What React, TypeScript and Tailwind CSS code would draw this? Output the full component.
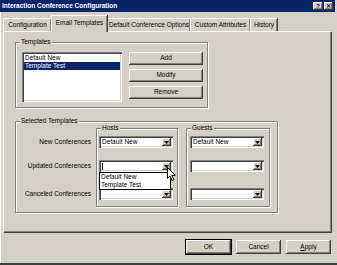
import React from "react";

const font = "font-['Liberation_Sans',Arial,sans-serif]";
const raised =
  "bg-[#d4d0c8] shadow-[inset_-1px_-1px_#404040,inset_1px_1px_#ffffff,inset_-2px_-2px_#808080]";
const sunken =
  "bg-white shadow-[inset_1px_1px_#808080,inset_2px_2px_#404040,inset_-1px_-1px_#ffffff,inset_-2px_-2px_#d4d0c8]";
const etched = "border border-[#808080] shadow-[1px_1px_0_#ffffff,inset_1px_1px_0_#ffffff]";

const Arrow = () => (
  <svg width="5" height="3" viewBox="0 0 5 3">
    <path d="M0 0h5L2.5 3z" fill="#000" />
  </svg>
);

const Combo = ({ value, caret }: { value?: string; caret?: boolean }) => (
  <div className={`flex h-[12px] w-[74px] items-center p-[2px] ${sunken}`}>
    <div className="flex flex-1 items-center pl-[1px] leading-none text-black">
      {caret && <span className="h-[7px] w-px bg-black" />}
      {value}
    </div>
    <div className={`flex h-[8px] w-[9px] items-center justify-center ${raised}`}>
      <Arrow />
    </div>
  </div>
);

const Button = ({
  label,
  def,
  wide,
}: {
  label: React.ReactNode;
  def?: boolean;
  wide?: boolean;
}) => (
  <button
    className={`flex items-center justify-center leading-none text-black ${raised} ${
      wide ? "h-[14px] w-[45px]" : "h-[13px] w-[74px]"
    } ${def ? "outline outline-1 outline-black" : ""}`}
  >
    {label}
  </button>
);

const Group = ({
  title,
  className,
  children,
}: {
  title: string;
  className: string;
  children: React.ReactNode;
}) => (
  <div className={`relative ${etched} ${className}`}>
    <span className="absolute left-[4px] top-[-5px] bg-[#d4d0c8] px-[1px] leading-[8px]">{title}</span>
    {children}
  </div>
);

const tabs = [
  { label: "Configuration", w: "w-[48px]" },
  { label: "Email Templates", w: "w-[56px]", active: true },
  { label: "Default Conference Options", w: "w-[83px]" },
  { label: "Custom Attributes", w: "w-[60px]" },
  { label: "History", w: "w-[27px]" },
];

export default function App() {
  return (
    <div
      className={`${font} flex h-[265px] w-[337px] flex-col overflow-hidden bg-[#d4d0c8] text-[6.5px] text-black border-b-2 border-b-[#404040] shadow-[inset_1px_0_#ffffff]`}
    >
      {/* title bar */}
      <div className="flex h-[12px] w-[335px] shrink-0 items-center bg-[#0a246a] pl-[2px] pr-[2px]">
        <span className="flex-1 text-[6.5px] font-bold leading-none text-white">
          Interaction Conference Configuration
        </span>
        <div className="flex gap-[1px]">
          <div className={`flex h-[8px] w-[10px] items-center justify-center text-[6px] font-bold leading-none ${raised}`}>
            ?
          </div>
          <div className={`flex h-[8px] w-[9px] items-center justify-center text-[6px] font-bold leading-none ${raised}`}>
            ✕
          </div>
        </div>
      </div>

      {/* tabs */}
      <div className="flex h-[19px] shrink-0 items-end pl-[3px]">
        {tabs.map((t) =>
          t.active ? (
            <div
              key={t.label}
              className={`relative z-10 -mb-px flex h-[17px] ${t.w} items-center justify-center border-l border-t border-white bg-[#d4d0c8] pb-[2px] leading-none shadow-[inset_-1px_0_#808080,1px_0_#404040]`}
            >
              {t.label}
            </div>
          ) : (
            <div
              key={t.label}
              className={`flex h-[13px] ${t.w} items-center justify-center border-l border-t border-white leading-none shadow-[inset_-1px_0_#808080,1px_0_#404040]`}
            >
              {t.label}
            </div>
          )
        )}
      </div>

      {/* tab panel */}
      <div className="ml-[3px] h-[201px] w-[328px] shrink-0 border-l border-t border-white pl-[11px] shadow-[inset_-1px_-1px_#808080,1px_1px_#404040]">
        <Group title="Templates" className="mt-[10px] h-[66px] w-[193px]">
          <div className="flex pl-[6px] pt-[9px]">
            <div className={`h-[50px] w-[100px] p-[2px] ${sunken}`}>
              <div className="flex h-[8px] items-center pl-[1px] leading-none">Default New</div>
              <div className="flex h-[8px] items-center bg-[#0a246a] pl-[1px] leading-none text-white">
                Template Test
              </div>
            </div>
            <div className="ml-[7px] flex flex-col gap-[4px]">
              <Button label="Add" />
              <Button label="Modify" />
              <Button label="Remove" />
            </div>
          </div>
        </Group>

        <Group title="Selected Templates" className="mt-[13px] h-[92px] w-[263px]">
          <div className="flex pt-[6px]">
            <div className="flex w-[75px] flex-col items-end pt-[8px] leading-none">
              <div className="flex h-[12px] items-center">New Conferences</div>
              <div className="mt-[12px] flex h-[12px] items-center">Updated Conferences</div>
              <div className="mt-[16px] flex h-[12px] items-center">Canceled Conferences</div>
            </div>

            <Group title="Hosts" className="ml-[5px] h-[79px] w-[82px]">
              <div className="flex flex-col pl-[2px] pt-[7px]">
                <Combo value="Default New" />
                <div className="relative mt-[12px]">
                  <Combo caret />
                  <div className="absolute left-0 top-[12px] z-20 h-[18px] w-[72px] border border-black bg-white pl-[1px] leading-none">
                    <div className="flex h-[8px] items-center">Default New</div>
                    <div className="flex h-[8px] items-center">Template Test</div>
                  </div>
                  <svg
                    className="absolute left-[68px] top-[7px] z-30"
                    width="9"
                    height="14"
                    viewBox="0 0 9 14"
                  >
                    <path
                      d="M0.5 0.5V11.5L3 9L5 13.5L6.8 12.7L4.8 8.3H8.3Z"
                      fill="#fff"
                      stroke="#000"
                      strokeWidth="1"
                      strokeLinejoin="round"
                    />
                  </svg>
                </div>
                <div className="mt-[16px]">
                  <Combo />
                </div>
              </div>
            </Group>

            <Group title="Guests" className="ml-[8px] h-[79px] w-[84px]">
              <div className="flex flex-col pl-[3px] pt-[7px]">
                <Combo value="Default New" />
                <div className="mt-[12px]">
                  <Combo />
                </div>
                <div className="mt-[16px]">
                  <Combo />
                </div>
              </div>
            </Group>
          </div>
        </Group>
      </div>

      {/* dialog buttons */}
      <div className="mt-[8px] flex justify-end gap-[5px] pr-[6px]">
        <Button label="OK" def wide />
        <Button label="Cancel" wide />
        <Button
          label={
            <span>
              <span className="underline">A</span>pply
            </span>
          }
          wide
        />
      </div>
    </div>
  );
}
